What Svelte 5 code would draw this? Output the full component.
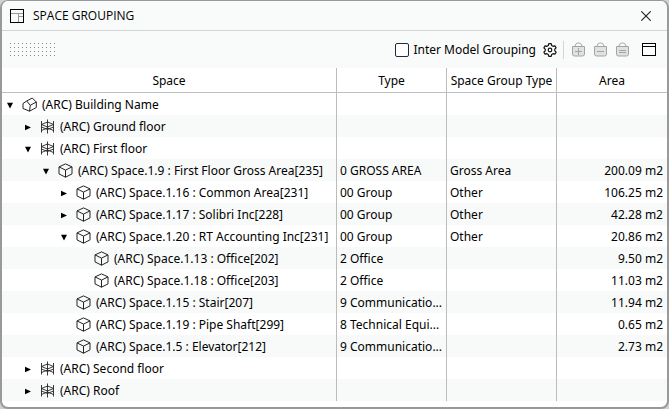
<script>
    let interModel = $state(false);

    let rows = $state([
        { level: 0, icon: 'building', name: '(ARC) Building Name', open: true },
        { level: 1, icon: 'floor', name: '(ARC) Ground floor', open: false },
        { level: 1, icon: 'floor', name: '(ARC) First floor', open: true },
        { level: 2, icon: 'space', name: '(ARC) Space.1.9 : First Floor Gross Area[235]', open: true, type: '0 GROSS AREA', group: 'Gross Area', area: '200.09 m2' },
        { level: 3, icon: 'space', name: '(ARC) Space.1.16 : Common Area[231]', open: false, type: '00 Group', group: 'Other', area: '106.25 m2' },
        { level: 3, icon: 'space', name: '(ARC) Space.1.17 : Solibri Inc[228]', open: false, type: '00 Group', group: 'Other', area: '42.28 m2' },
        { level: 3, icon: 'space', name: '(ARC) Space.1.20 : RT Accounting Inc[231]', open: true, type: '00 Group', group: 'Other', area: '20.86 m2' },
        { level: 4, icon: 'space', name: '(ARC) Space.1.13 : Office[202]', type: '2 Office', area: '9.50 m2' },
        { level: 4, icon: 'space', name: '(ARC) Space.1.18 : Office[203]', type: '2 Office', area: '11.03 m2' },
        { level: 3, icon: 'space', name: '(ARC) Space.1.15 : Stair[207]', type: '9 Communicatio...', area: '11.94 m2' },
        { level: 3, icon: 'space', name: '(ARC) Space.1.19 : Pipe Shaft[299]', type: '8 Technical Equi...', area: '0.65 m2' },
        { level: 3, icon: 'space', name: '(ARC) Space.1.5 : Elevator[212]', type: '9 Communicatio...', area: '2.73 m2' },
        { level: 1, icon: 'floor', name: '(ARC) Second floor', open: false },
        { level: 1, icon: 'floor', name: '(ARC) Roof', open: false },
    ]);

    // a closed row hides everything below it that sits deeper
    let visible = $derived.by(() => {
        const out = [];
        let limit = Infinity;
        for (const row of rows) {
            if (row.level > limit) continue;
            limit = row.open === false ? row.level : Infinity;
            out.push(row);
        }
        return out;
    });

    const bags = [
        { label: 'Add to group', d: 'M7.5 6v7M4 9.5h7' },
        { label: 'Remove from group', d: 'M4 9.5h7' },
        { label: 'Group equal spaces', d: 'M4 8.5h7M4 10.5h7' },
    ];
</script>

<div class="window">
    <header class="titlebar">
        <svg class="logo" width="14" height="14" viewBox="0 0 14 14" fill="none">
            <path d="M1 4.5h12M8.5 4.5V13M8.5 7.5H13" stroke="#999" />
            <rect x=".5" y=".5" width="13" height="13" stroke="#000" />
        </svg>
        <h1>SPACE GROUPING</h1>
        <button class="close" aria-label="Close">
            <svg width="10" height="10" viewBox="0 0 10 10" fill="none" stroke="#222" stroke-width="1.1">
                <path d="M.3.3l9.4 9.4M9.7.3L.3 9.7" />
            </svg>
        </button>
    </header>

    <div class="toolbar">
        <svg class="grip" width="45" height="13" viewBox="0 0 45 13">
            {#each Array(12) as _, x}
                {#each Array(4) as _, y}
                    <rect x={x * 4} y={y * 4} width="1" height="1" fill="#7f8890" />
                {/each}
            {/each}
        </svg>
        <label>
            <input type="checkbox" bind:checked={interModel} />
            Inter Model Grouping
        </label>
        <button class="gear" aria-label="Settings">
            <svg width="14" height="14" viewBox="0 0 14 14" fill="none" stroke="#111" stroke-width="1.2" stroke-linejoin="round">
                <path d="M5.8.7h2.4l.5 1.8 1.4.8 1.8-.5 1.2 2.1-1.3 1.3v1.6l1.3 1.3-1.2 2.1-1.8-.5-1.4.8-.5 1.8H5.8l-.5-1.8-1.4-.8-1.8.5L.9 9.1l1.3-1.3V6.2L.9 4.9l1.2-2.1 1.8.5 1.4-.8z" />
                <circle cx="7" cy="7" r="1.8" />
            </svg>
        </button>
        <div class="tools">
            {#each bags as bag}
                <button aria-label={bag.label} disabled>
                    <svg width="15" height="15" viewBox="0 0 15 15" fill="none" stroke="#a3a3a3">
                        <path d="M1.5 4.5h12v7.5a2 2 0 0 1-2 2h-8a2 2 0 0 1-2-2z" fill="#e0e1e0" />
                        <path d="M4 4.5C4.3 2 5.5 1 7.5 1S10.7 2 11 4.5" />
                        <path d={bag.d} />
                    </svg>
                </button>
            {/each}
        </div>
        <button class="panel" aria-label="Show panel">
            <svg width="14" height="14" viewBox="0 0 14 14" fill="none" stroke="#000">
                <rect x=".5" y=".5" width="13" height="12" fill="#fff" />
                <path d="M1 3.5h12" />
            </svg>
        </button>
    </div>

    <table>
        <colgroup>
            <col />
            <col class="narrow" />
            <col class="narrow" />
            <col class="narrow" />
        </colgroup>
        <thead>
            <tr>
                <th>Space</th>
                <th>Type</th>
                <th>Space Group Type</th>
                <th>Area</th>
            </tr>
        </thead>
        <tbody>
            {#each visible as row}
                <tr>
                    <td>
                        <div class="node" style="padding-left: {row.level * 18}px">
                            {#if row.open !== undefined}
                                <button class="toggle" aria-label="Toggle {row.name}" aria-expanded={row.open} onclick={() => row.open = !row.open}>
                                    <svg width="7" height="7" viewBox="0 0 7 7" fill="#000">
                                        <path d={row.open ? 'M0 .8h6l-3 5.7z' : 'M0 .8l6 2.7L0 6.2z'} />
                                    </svg>
                                </button>
                            {:else}
                                <span class="toggle"></span>
                            {/if}
                            <svg class="icon" width="15" height="15" viewBox="0 0 15 15" fill="none" stroke="#222" stroke-linejoin="round">
                                {#if row.icon === 'building'}
                                    <path d="M4.7 4L10.3 1 14.3 5 8.3 8.3zM4.7 4L1 6.5v5L7.5 14.200 8.300 8.300M14.300 5v5.500L7.500 14.200" />
                                {:else if row.icon === 'floor'}
                                    <path d="M1.500 2v11.500M13.500 2v11.500M7.500.5v14M1.500 5.500l6-2.500 6 2.500-6 2.500zM1.500 8l6 2.500 6-2.500M1.500 11.500l6-2.500 6 2.500" stroke-width=".9" />
                                {:else}
                                    <path d="M7.500.9L14 3.900v7L7.500 14.200 1 10.900v-7zM1 3.900l6.500 3.200L14 3.900M7.500 7.100v7.100" />
                                {/if}
                            </svg>
                            <span>{row.name}</span>
                        </div>
                    </td>
                    <td>{row.type ?? ''}</td>
                    <td>{row.group ?? ''}</td>
                    <td class="area">{row.area ?? ''}</td>
                </tr>
            {/each}
        </tbody>
    </table>
</div>

<style>
    :global(body) {
        background: #d0d0d0;
    }
    .window {
        background: #fff;
        border: 1px solid #999;
        border-width: 1px 2px 2px;
        border-radius: 8px;
        box-sizing: border-box;
        min-height: 100vh;
        overflow: hidden;
        font: 12px/16px "Noto Sans", sans-serif;
        color: #000;
    }
    button {
        background: none;
        border: 0;
        padding: 0;
        color: inherit;
    }
    svg {
        display: block;
        flex: none;
    }
    .titlebar {
        display: flex;
        align-items: center;
        height: 29px;
        padding: 0 16px 0 8px;
        background: #f9fbfa;
        border-bottom: 1px solid #d3d5d5;
    }
    h1 {
        flex: 1;
        margin: 0 0 0 9px;
        font: 12px/16px "Open Sans", "Noto Sans", sans-serif;
    }
    .toolbar {
        display: flex;
        align-items: center;
        height: 37px;
        padding: 0 11px 0 8px;
        background: #f9fbfa;
    }
    .grip {
        margin-right: auto;
    }
    label {
        display: flex;
        align-items: center;
        gap: 4px;
    }
    input {
        appearance: none;
        box-sizing: border-box;
        width: 14px;
        height: 14px;
        margin: 0;
        border: 1px solid #26283f;
        border-radius: 2px;
        background: #fff;
    }
    input:checked {
        background: #26283f;
    }
    .gear {
        margin: 0 6px 0 7px;
    }
    .tools {
        display: flex;
        align-items: center;
        gap: 7px;
        height: 18px;
        padding-left: 7px;
        border-left: 1px solid #d3d5d5;
    }
    .panel {
        margin-left: 12px;
    }
    table {
        width: 100%;
        table-layout: fixed;
        border-collapse: separate;
        border-spacing: 0;
    }
    .narrow {
        width: 110px;
    }
    th, td {
        box-sizing: border-box;
        border-right: 1px solid #bcbcbc;
    }
    th {
        height: 25px;
        padding: 2px 0 0;
        font-weight: 400;
        border-bottom: 1px solid #bcc0c6;
    }
    th:last-child, td:last-child {
        border-right: 0;
    }
    td {
        height: 22px;
        padding: 2px 0 0 3px;
        white-space: nowrap;
    }
    tbody tr:nth-child(even) {
        background: #f8faf9;
    }
    .node {
        display: flex;
        align-items: center;
    }
    .toggle {
        width: 10px;
        padding-left: 2px;
        box-sizing: border-box;
        flex: none;
    }
    .icon {
        margin: 0 5px 1px 7px;
    }
    td.area {
        padding: 2px 4px 0 0;
        text-align: right;
    }
</style>
